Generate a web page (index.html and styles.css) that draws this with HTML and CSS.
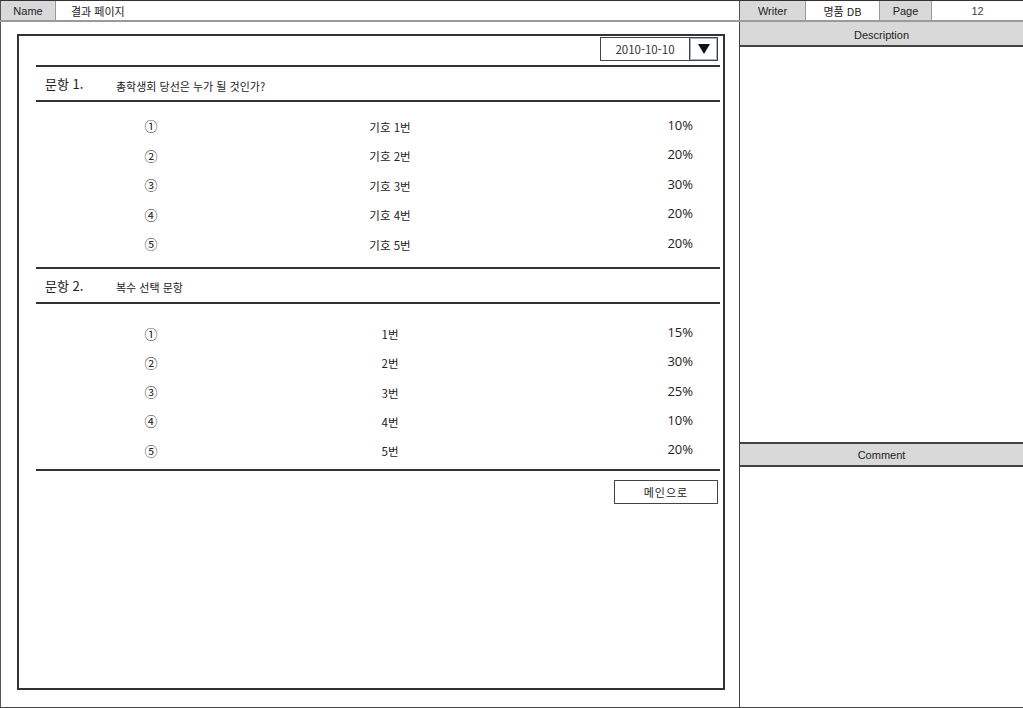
FILE: index.html
```html
<!DOCTYPE html>
<html lang="ko">
<head>
    <meta charset="UTF-8">
    <title>결과 페이지</title>
    <link rel="stylesheet" href="styles.css">
</head>
<body>
    <div class="page">
        <div class="topbar">
            <div class="cell label name-label">Name</div>
            <div class="cell title">결과 페이지</div>
            <div class="cell label writer-label">Writer</div>
            <div class="cell writer">명품 DB</div>
            <div class="cell label page-label">Page</div>
            <div class="cell page-no">12</div>
        </div>

        <div class="main">
            <div class="left">
                <div class="result-box">
                    <div class="date-row">
                        <div class="date-select">
                            <span class="date-value">2010-10-10</span>
                            <span class="date-arrow">
                                <svg width="12" height="10" viewBox="0 0 12 10"><polygon points="0,0 12,0 6,10" fill="#111"/></svg>
                            </span>
                        </div>
                    </div>

                    <div class="question">
                        <span class="q-no">문항 1.</span>
                        <span class="q-text">총학생회 당선은 누가 될 것인가?</span>
                    </div>
                    <div class="answers q1">
                        <div class="answer"><span class="num">①</span><span class="opt">기호 1번</span><span class="pct">10%</span></div>
                        <div class="answer"><span class="num">②</span><span class="opt">기호 2번</span><span class="pct">20%</span></div>
                        <div class="answer"><span class="num">③</span><span class="opt">기호 3번</span><span class="pct">30%</span></div>
                        <div class="answer"><span class="num">④</span><span class="opt">기호 4번</span><span class="pct">20%</span></div>
                        <div class="answer"><span class="num">⑤</span><span class="opt">기호 5번</span><span class="pct">20%</span></div>
                    </div>

                    <div class="question">
                        <span class="q-no">문항 2.</span>
                        <span class="q-text">복수 선택 문항</span>
                    </div>
                    <div class="answers q2">
                        <div class="answer"><span class="num">①</span><span class="opt">1번</span><span class="pct">15%</span></div>
                        <div class="answer"><span class="num">②</span><span class="opt">2번</span><span class="pct">30%</span></div>
                        <div class="answer"><span class="num">③</span><span class="opt">3번</span><span class="pct">25%</span></div>
                        <div class="answer"><span class="num">④</span><span class="opt">4번</span><span class="pct">10%</span></div>
                        <div class="answer"><span class="num">⑤</span><span class="opt">5번</span><span class="pct">20%</span></div>
                    </div>

                    <div class="button-row">
                        <a href="#" class="main-button">메인으로</a>
                    </div>
                </div>
            </div>

            <div class="right">
                <div class="panel-head first">Description</div>
                <div class="panel-body description"></div>
                <div class="panel-head">Comment</div>
                <div class="panel-body comment"></div>
            </div>
        </div>
    </div>
</body>
</html>
```

FILE: styles.css
```css
body {
    margin: 0;
    font-family: "Noto Sans CJK KR", "Liberation Sans", sans-serif;
    background: #fff;
    color: #222;
}

.page {
    width: 1023px;
    height: 708px;
    display: flex;
    flex-direction: column;
    box-sizing: border-box;
    border-bottom: 1px solid #444;
    overflow: hidden;
}

/* top info bar */
.topbar {
    display: flex;
    height: 22px;
    box-sizing: border-box;
    border-top: 1px solid #333;
    border-bottom: 2px solid #9a9a9a;
}

.cell {
    display: flex;
    align-items: center;
    box-sizing: border-box;
    font-size: 11px;
    border-right: 1px solid #9a9a9a;
}

.label {
    background: #d9d9d9;
    justify-content: center;
    font-family: "Liberation Sans", Arial, sans-serif;
}

.name-label {
    width: 56px;
    border-left: 1px solid #555;
}

.title {
    width: 684px;
    padding-left: 15px;
    border-right: 1px solid #555;
}

.writer-label {
    width: 66px;
}

.writer {
    width: 74px;
    justify-content: center;
}

.page-label {
    width: 52px;
}

.page-no {
    flex: 1;
    justify-content: center;
    font-family: "Liberation Sans", Arial, sans-serif;
    color: #444;
    border-right: none;
}

.main {
    flex: 1;
    display: flex;
    min-height: 0;
}

/* left: result area */
.left {
    width: 740px;
    box-sizing: border-box;
    border-left: 1px solid #555;
    border-right: 1px solid #444;
    padding: 12px 14px 17px 16px;
    display: flex;
}

.result-box {
    flex: 1;
    border: 2px solid #333;
    padding: 1px 3px 0 17px;
    box-sizing: border-box;
}

.date-row {
    display: flex;
    justify-content: flex-end;
    padding-right: 2px;
    padding-bottom: 4px;
    border-bottom: 2px solid #333;
}

.date-select {
    display: flex;
    height: 24px;
    box-sizing: border-box;
    border: 1px solid #444;
}

.date-value {
    width: 88px;
    display: flex;
    align-items: center;
    justify-content: center;
    font-size: 11.5px;
    color: #333;
    border-right: 1px solid #444;
}

.date-arrow {
    width: 27px;
    display: flex;
    align-items: center;
    justify-content: center;
    box-sizing: border-box;
    border: 1px solid #9fb3cc;
}

.question {
    height: 33px;
    display: flex;
    align-items: center;
    border-bottom: 2px solid #333;
}

.q-no {
    width: 71px;
    padding-left: 9px;
    font-size: 13px;
    color: #222;
}

.q-text {
    font-size: 11px;
    padding-top: 4px;
}

.answers {
    border-bottom: 2px solid #333;
}

.answers.q1 {
    padding: 9px 0 8px;
}

.answers.q2 {
    padding: 15px 0 4px;
}

.answer {
    display: grid;
    grid-template-columns: 230px 248px 1fr;
    align-items: center;
    height: 29.5px;
    font-size: 11.5px;
}

.q2 .answer {
    height: 29.25px;
}

.num {
    text-align: center;
    font-size: 13px;
}

.opt {
    text-align: center;
    padding-top: 2px;
}

.pct {
    text-align: right;
    padding-right: 27px;
    padding-bottom: 2px;
    font-family: "Open Sans", "Noto Sans", sans-serif;
    font-size: 13px;
}

.button-row {
    display: flex;
    justify-content: flex-end;
    padding: 9px 2px 0 0;
}

.main-button {
    width: 104px;
    height: 24px;
    box-sizing: border-box;
    border: 1px solid #444;
    display: flex;
    align-items: center;
    justify-content: center;
    font-size: 11px;
    color: #222;
    text-decoration: none;
    letter-spacing: 1px;
}

/* right: description / comment */
.right {
    flex: 1;
    display: flex;
    flex-direction: column;
}

.panel-head {
    height: 23px;
    box-sizing: border-box;
    background: #d9d9d9;
    border-bottom: 2px solid #444;
    display: flex;
    align-items: center;
    justify-content: center;
    font-family: "Liberation Sans", Arial, sans-serif;
    font-size: 11px;
}

.panel-head.first {
    height: 25px;
    padding-top: 2px;
}

.panel-body.description {
    height: 395px;
    border-bottom: 2px solid #444;
}

.panel-body.comment {
    flex: 1;
}
```
